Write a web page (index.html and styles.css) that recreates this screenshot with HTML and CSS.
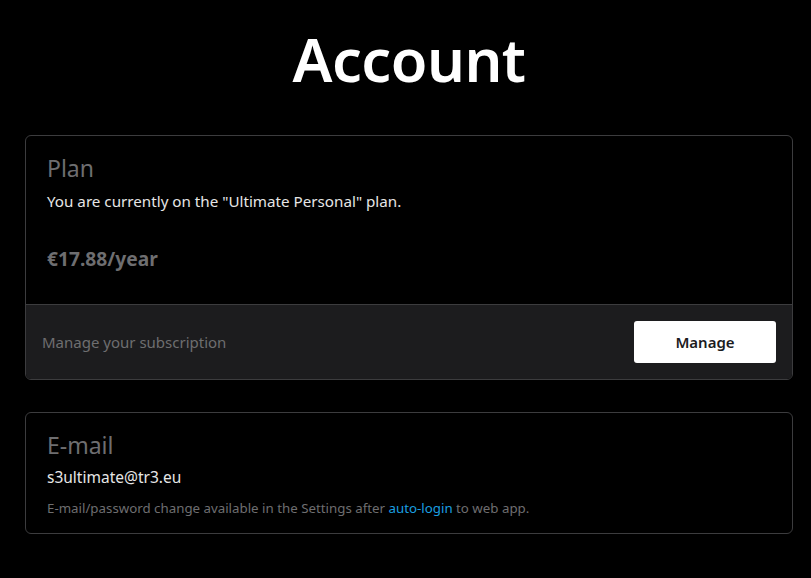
FILE: index.html
```html
<!DOCTYPE html>
<html lang="en">
<head>
<meta charset="utf-8">
<title>Account</title>
<link rel="stylesheet" href="styles.css">
</head>
<body>
<main class="page">
  <h1 class="title">Account</h1>
  <section class="card">
    <div class="card-body plan-body">
      <h2 class="card-title">Plan</h2>
      <p class="desc">You are currently on the "Ultimate Personal" plan.</p>
      <p class="price">€17.88/year</p>
    </div>
    <div class="card-footer">
      <span class="footer-text">Manage your subscription</span>
      <button class="btn">Manage</button>
    </div>
  </section>
  <section class="card">
    <div class="card-body email-body">
      <h2 class="card-title">E-mail</h2>
      <p class="email">s3ultimate@tr3.eu</p>
      <p class="note">E-mail/password change available in the Settings after <a class="link" href="#">auto-login</a> to web app.</p>
    </div>
  </section>
</main>
</body>
</html>
```

FILE: styles.css
```css
* { box-sizing: border-box; }
html, body { margin: 0; padding: 0; background: #000; }
body {
  font-family: "Noto Sans", "Open Sans", sans-serif;
  color: #e6e6e6;
}
.page {
  padding: 0 18px 40px 25px;
}
.title {
  margin: 0;
  padding-top: 24px;
  height: 135px;
  text-align: center;
  font-size: 59.5px;
  line-height: 70px;
  font-weight: 600;
  color: #fff;
  letter-spacing: -0.5px;
}
.card {
  border: 1px solid #3c3c3e;
  border-radius: 6px;
  overflow: hidden;
  margin-bottom: 32px;
}
.card-body {
  padding: 16px 21px 0;
}
.plan-body { height: 168px; }
.email-body { height: 120px; padding-top: 16px; }
.card-title {
  margin: 0;
  font-size: 23px;
  line-height: 32px;
  font-weight: 400;
  color: #6e6e70;
}
.desc {
  margin: 7px 0 0;
  font-size: 15.2px;
  line-height: 20px;
  color: #e6e6e6;
}
.price {
  margin: 34px 0 0;
  font-size: 19.2px;
  line-height: 28px;
  font-weight: 700;
  color: #6e6e70;
}
.card-footer {
  border-top: 1px solid #3c3c3e;
  background: #1c1c1e;
  padding: 16px 16px 16px 16px;
  display: flex;
  align-items: center;
  justify-content: space-between;
}
.footer-text {
  font-size: 15px;
  color: #6e6e70;
}
.btn {
  width: 142px;
  height: 42px;
  border: none;
  border-radius: 3px;
  background: #fff;
  color: #1c1c1e;
  font-family: inherit;
  font-size: 15px;
  font-weight: 600;
}
.email {
  margin: 5px 0 0;
  font-size: 15.5px;
  line-height: 22px;
  color: #e6e6e6;
}
.note {
  margin: 11px 0 0;
  font-size: 13.3px;
  line-height: 18px;
  color: #6e6e70;
}
.link {
  color: #1a9fe0;
  text-decoration: none;
}
```
